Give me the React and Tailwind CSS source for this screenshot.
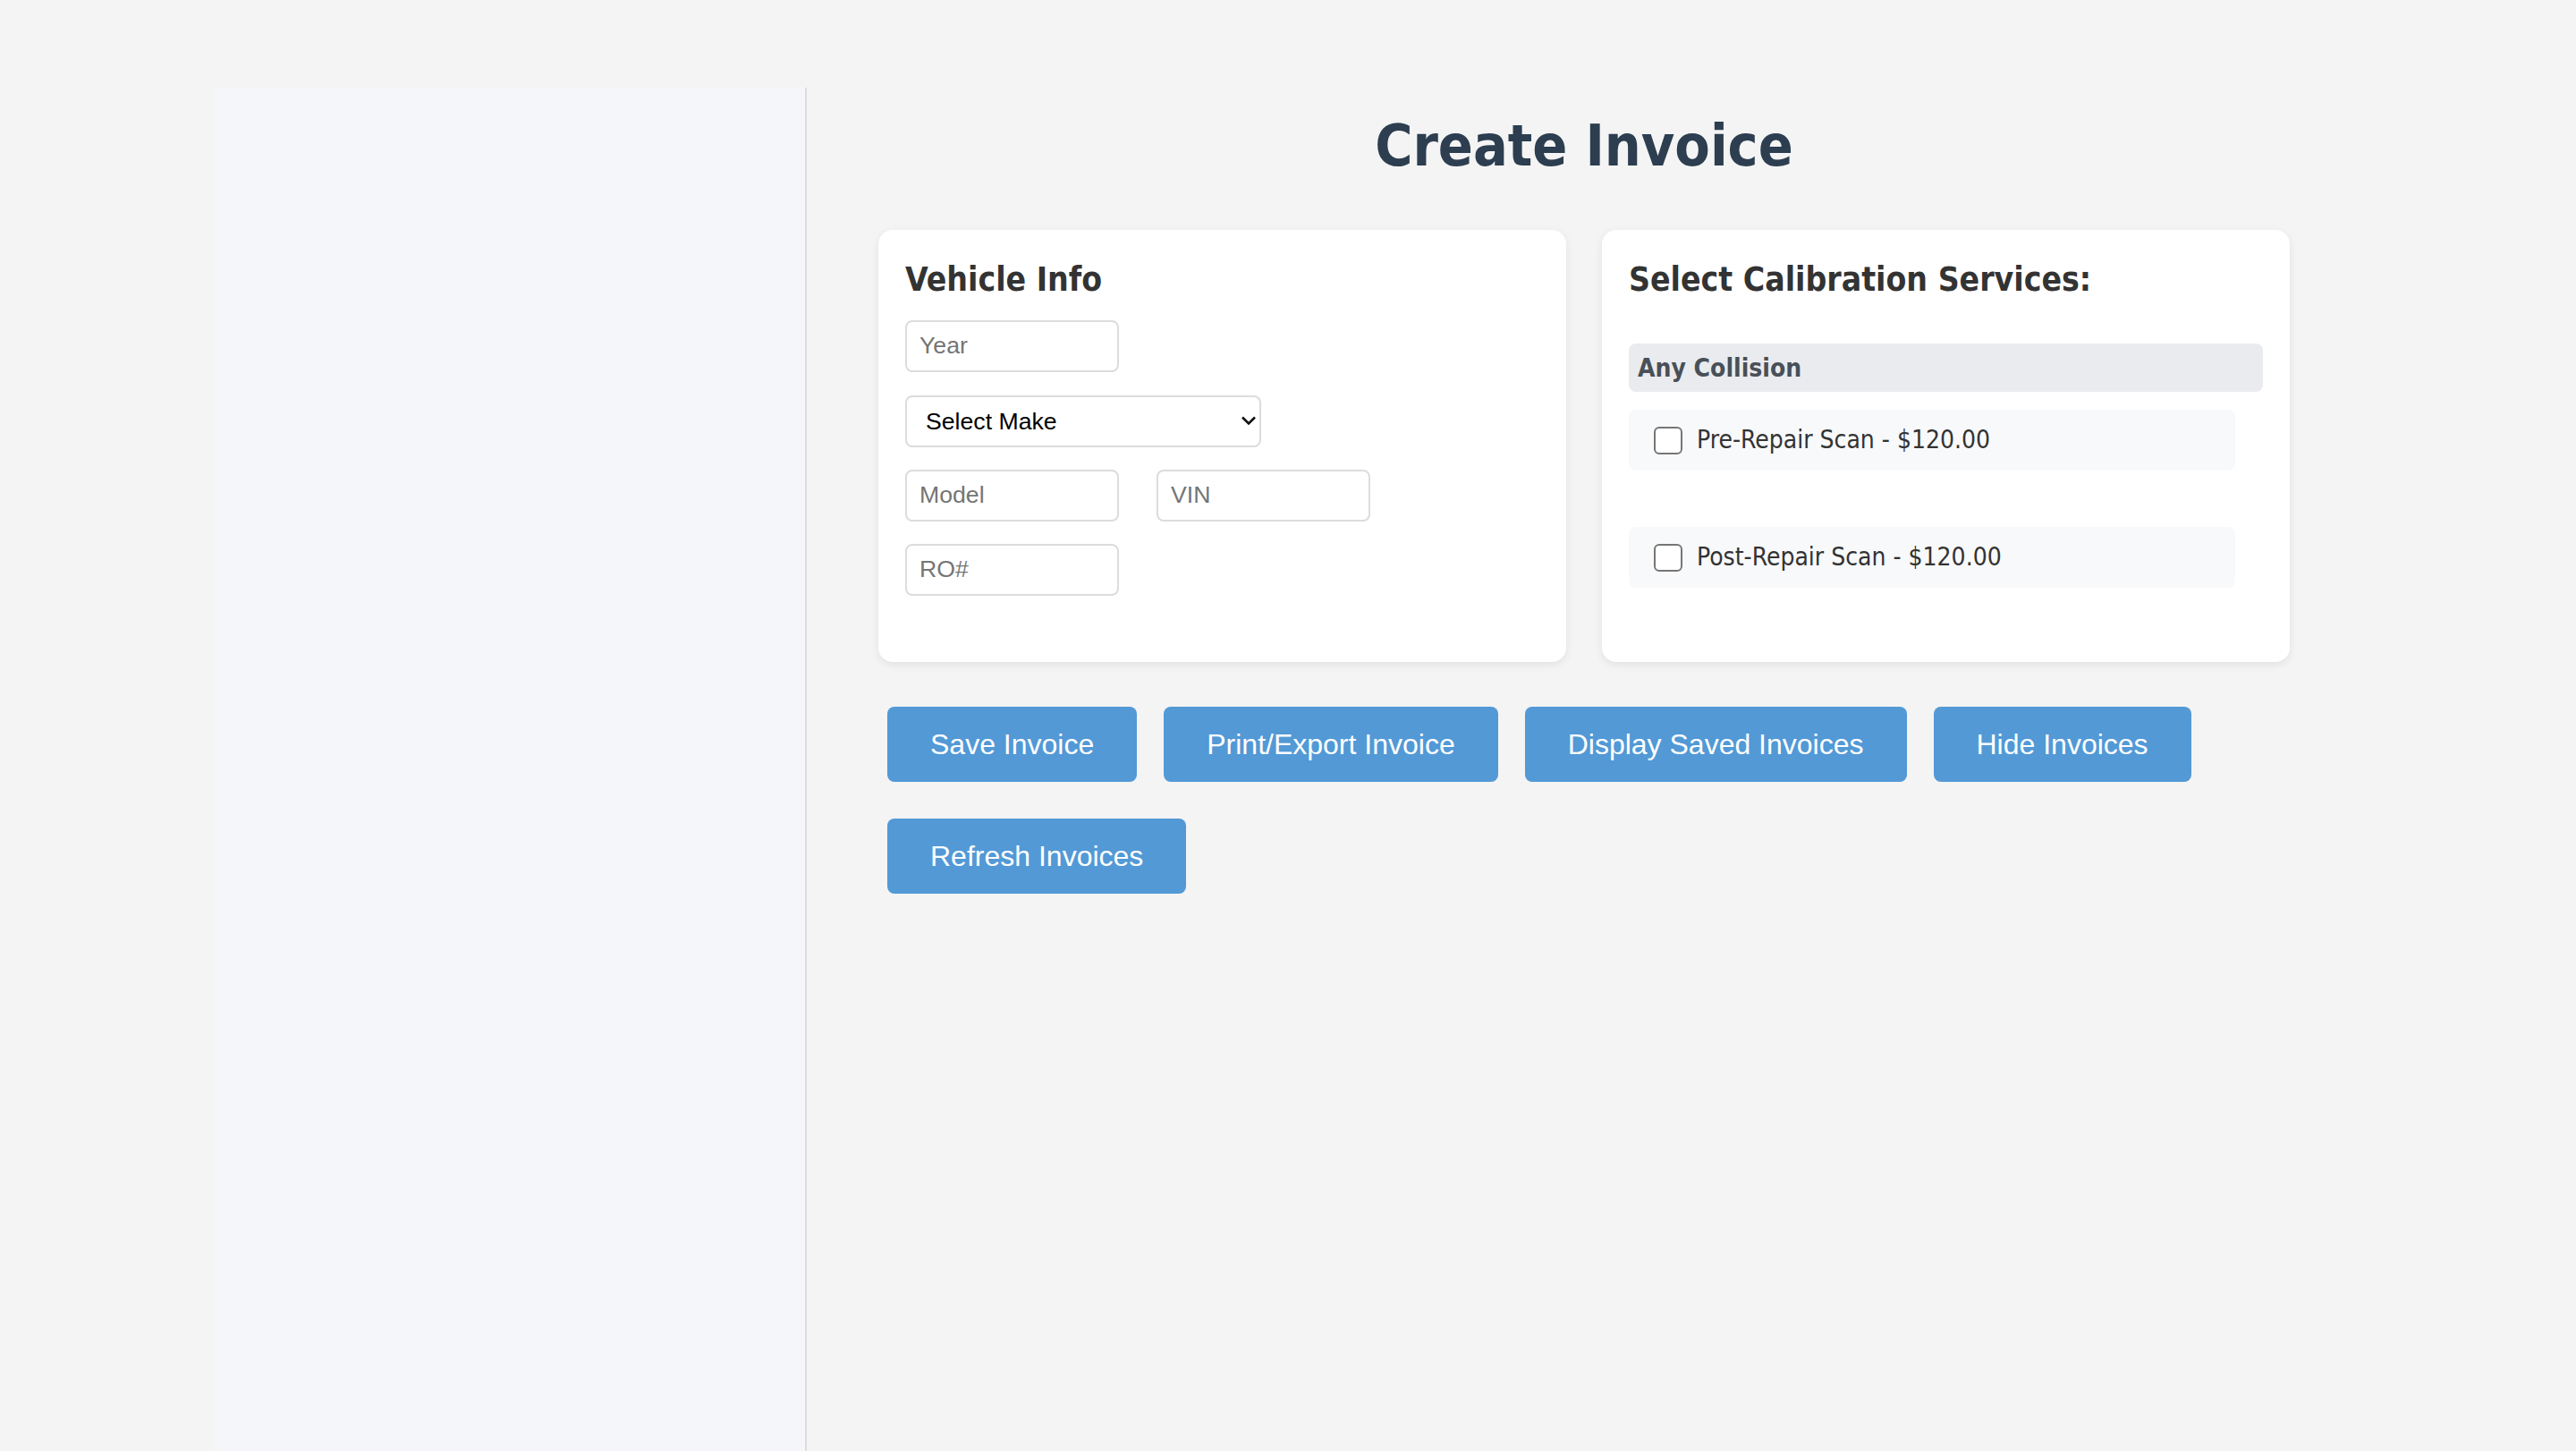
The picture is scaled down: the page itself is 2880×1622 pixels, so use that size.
import React from 'react';

const inputCls =
  "h-[58px] w-[239px] rounded-[8px] border-2 border-[#dcdcdc] bg-white px-[14px] font-['Liberation_Sans',Arial,sans-serif] text-[26.67px] text-black outline-none placeholder:text-[#757575]";

const services = ['Pre-Repair Scan - $120.00', 'Post-Repair Scan - $120.00'];
const buttons = ['Save Invoice', 'Print/Export Invoice', 'Display Saved Invoices', 'Hide Invoices', 'Refresh Invoices'];

export default function App() {
  return (
    <div className="min-h-screen bg-[#f4f4f4] pt-[98px]">
      <div className="mx-auto flex w-[2400px]">
        {/* sidebar */}
        <aside className="h-[1524px] w-[662px] shrink-0 border-r-2 border-[#dddddd] bg-[#f5f6f9]" />

        <main className="flex-1 px-[80px] font-['DejaVu_Sans_Condensed','DejaVu_Sans',sans-serif] font-stretch-condensed">
          <h1 className="mt-[28px] text-center text-[64px] font-bold leading-[1.164] text-[#2c3e50]">Create Invoice</h1>

          <div className="mt-[57px] grid grid-cols-2 gap-[40px]">
            {/* Vehicle info */}
            <div className="h-[483px] rounded-[16px] bg-white px-[30px] pt-[34px] shadow-[0_3px_10px_rgba(0,0,0,0.08)]">
              <h3 className="text-[37px] font-bold leading-[1.164] text-[#333]">Vehicle Info</h3>
              <div className="mt-[23px]">
                <input className={inputCls} placeholder="Year" />
              </div>
              <div className="relative mt-[26px] w-[398px]">
                <select className="h-[58px] w-[398px] appearance-none rounded-[8px] border-2 border-[#dcdcdc] bg-white pl-[21px] font-['Liberation_Sans',Arial,sans-serif] text-[26.67px] text-black outline-none">
                  <option>Select Make</option>
                </select>
                <svg className="pointer-events-none absolute left-[375px] top-[22px]" width="18" height="12" viewBox="0 0 18 12">
                  <path d="M2 2.5 L9 9.5 L16 2.5" fill="none" stroke="#111" strokeWidth="2.6" />
                </svg>
              </div>
              <div className="mt-[25px] flex gap-[42px]">
                <input className={inputCls} placeholder="Model" />
                <input className={inputCls} placeholder="VIN" />
              </div>
              <div className="mt-[25px]">
                <input className={inputCls} placeholder="RO#" />
              </div>
            </div>

            {/* Services */}
            <div className="h-[483px] rounded-[16px] bg-white px-[30px] pt-[34px] shadow-[0_3px_10px_rgba(0,0,0,0.08)]">
              <h3 className="text-[37px] font-bold leading-[1.164] text-[#333]">Select Calibration Services:</h3>
              <div className="mt-[49px] rounded-[8px] bg-[#e9ebef] px-[10px] pb-[10px] pt-[12px] text-[28px] font-bold leading-[1.164] text-[#495057]">
                Any Collision
              </div>
              <div className="mt-[20px] flex flex-col gap-[63px]">
                {services.map(s => (
                  <label key={s} className="flex h-[68px] w-[678px] items-center rounded-[8px] bg-[#f8f9fa] pl-[28px] text-[28px] leading-[1.164] text-[#333]">
                    <span className="mr-[16px] h-[31px] w-[32px] shrink-0 rounded-[6px] border-[2.5px] border-[#767676] bg-white" />
                    {s}
                  </label>
                ))}
              </div>
            </div>
          </div>

          <div className="mt-[50px] flex flex-wrap gap-x-[30px] gap-y-[41px] pl-[10px]">
            {buttons.map(b => (
              <button key={b} className="h-[84px] rounded-[8px] bg-[#5299d6] px-[48px] font-['Liberation_Sans',Arial,sans-serif] text-[32px] text-white">
                {b}
              </button>
            ))}
          </div>
        </main>
      </div>
    </div>
  );
}
